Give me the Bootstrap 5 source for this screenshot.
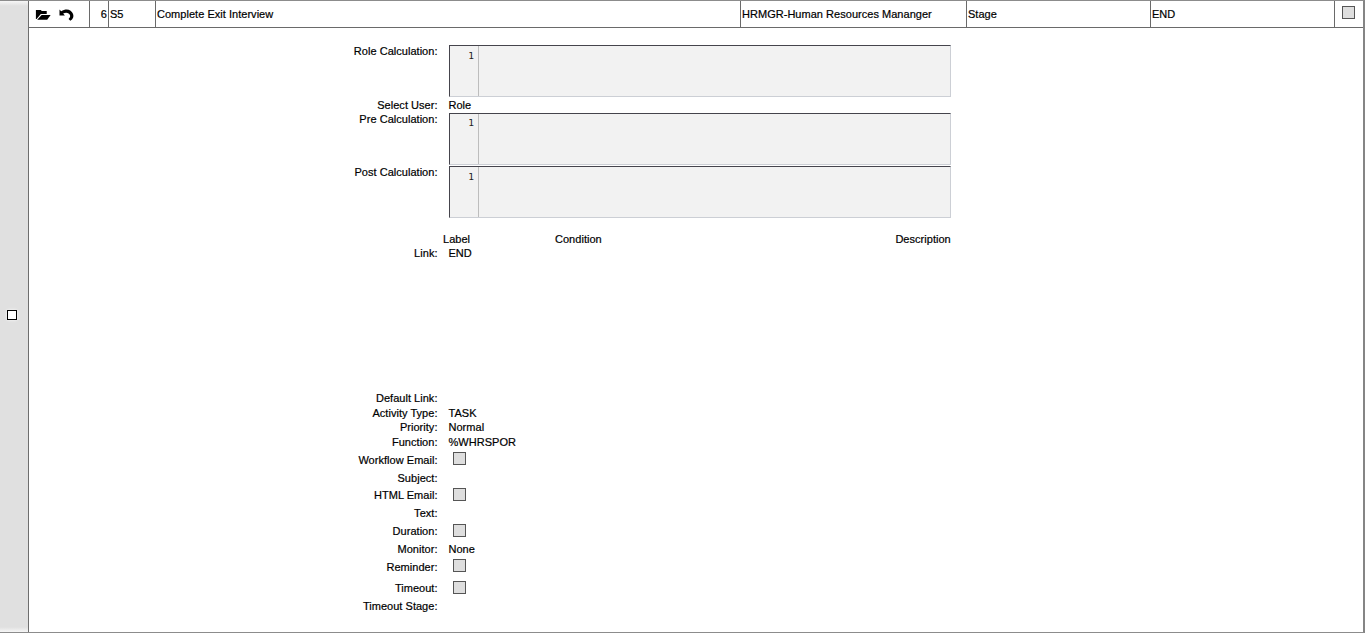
<!DOCTYPE html>
<html lang="en">
<head>
<meta charset="utf-8">
<title>Workflow Stage</title>
<meta name="viewport" content="width=device-width, initial-scale=1">
<link href="https://cdn.jsdelivr.net/npm/bootstrap@5.3.0/dist/css/bootstrap.min.css" rel="stylesheet">
<style>
  body { font: 11px/14px "Liberation Sans", Arial, sans-serif; color: #000; letter-spacing: .03px; -webkit-text-stroke: .2px #000; }
  .frame { border-top: 1px solid #8c8c8c; border-bottom: 1px solid #8c8c8c; border-right: 2px solid #858585; }
  .rail { width: 29px; background: linear-gradient(#f6f6f6, #e0e0e0 5px, #e0e0e0 calc(100% - 5px), #f6f6f6); border-right: 1px solid #6e6e6e; padding: 0 0 4px 7px; }
  .rail-box { width: 10px; height: 10px; border: 1px solid #000; background: #fff; box-shadow: 0 0 3px #fff; }
  .stage-bar { height: 27px; border-bottom: 1px solid #6a6a6a; }
  .cell { border-right: 1px solid #6a6a6a; padding: 6px 0 0 1px; white-space: nowrap; flex: none; }
  .tick { width: 13px; height: 13px; background: #dedede; border: 1px solid #555; flex: none; margin-left: 4px; }
  .tick-up { margin-top: -1px; }
  .stage-tick { margin: 5px 0 0 7px; }
  .field { display: flex; align-items: flex-start; }
  .field-label { width: 408.5px; text-align: right; margin-right: 11px; flex: none; }
  .code-box { width: 502px; height: 52px; margin: 1px 0 0 .5px; background: #f2f2f2; border: 1px solid #cccfd5; border-top-color: #45444c; border-left-color: #45444c; flex: none; }
  .gutter { width: 29px; border-right: 1px solid #bdbdbd; text-align: right; padding: 3px 4px 0 0; font: 9.5px/14px "DejaVu Sans Mono", monospace; color: #222; -webkit-text-stroke: 0; }
  .gutter-tight { padding-top: 2px; }
  .h14 { height: 14px; } .h15 { height: 15px; } .h17 { height: 17px; } .h18 { height: 18px; } .h21 { height: 21px; }
  .h53 { height: 53px; } .h54 { height: 54px; } .h67 { height: 67px; } .h145 { height: 145px; }
</style>
</head>
<body>
<div class="frame vh-100 d-flex overflow-hidden">
  <aside class="rail d-flex align-items-center flex-shrink-0"><div class="rail-box"></div></aside>
  <main class="flex-grow-1">
    <header class="stage-bar d-flex">
      <div class="cell d-flex" style="width:61px">
        <svg width="60" height="16" viewBox="30 6 60 16" aria-hidden="true">
          <path d="M36 18V9h5l1 1h5v3h-6l-4.300 5z"/>
          <path d="M37.300 18.800 41.800 14H51l-3.500 4.800z"/>
          <path d="M60 8.500v6h5.500l-1.800-2c3.200-1.600 6.300-.6 7 1.800.4 1.400-.2 2.600-1.500 3.700l1.800 1.800c2.800-1.500 3.800-4.200 2.800-6.800-1.600-4.600-6.900-6.200-12.100-2.800z"/>
        </svg>
      </div>
      <div class="cell text-end" style="width:19px;padding-right:1px">6</div>
      <div class="cell" style="width:47px">S5</div>
      <div class="cell" style="width:585px">Complete Exit Interview</div>
      <div class="cell" style="width:226px">HRMGR-Human Resources Mananger</div>
      <div class="cell" style="width:184px">Stage</div>
      <div class="cell" style="width:184px">END</div>
      <div class="tick stage-tick"></div>
    </header>
    <section class="pt-3">
      <div class="field h54"><div class="field-label">Role Calculation:</div><div class="code-box d-flex"><div class="gutter">1</div></div></div>
      <div class="field h14"><div class="field-label">Select User:</div><div>Role</div></div>
      <div class="field h53"><div class="field-label">Pre Calculation:</div><div class="code-box d-flex"><div class="gutter gutter-tight">1</div></div></div>
      <div class="field h67"><div class="field-label">Post Calculation:</div><div class="code-box d-flex"><div class="gutter">1</div></div></div>
      <div class="field h14"><div style="width:112px;margin-left:414px">Label</div><div>Condition</div><div class="text-end" style="width:349px">Description</div></div>
      <div class="field h145"><div class="field-label">Link:</div><div>END</div></div>
      <div class="field h15"><div class="field-label">Default Link:</div></div>
      <div class="field h14"><div class="field-label">Activity Type:</div><div>TASK</div></div>
      <div class="field h15"><div class="field-label">Priority:</div><div>Normal</div></div>
      <div class="field h18"><div class="field-label">Function:</div><div>%WHRSPOR</div></div>
      <div class="field h18"><div class="field-label">Workflow Email:</div><div class="tick tick-up"></div></div>
      <div class="field h17"><div class="field-label">Subject:</div></div>
      <div class="field h18"><div class="field-label">HTML Email:</div><div class="tick"></div></div>
      <div class="field h18"><div class="field-label">Text:</div></div>
      <div class="field h18"><div class="field-label">Duration:</div><div class="tick"></div></div>
      <div class="field h18"><div class="field-label">Monitor:</div><div>None</div></div>
      <div class="field h21"><div class="field-label">Reminder:</div><div class="tick tick-up"></div></div>
      <div class="field h18"><div class="field-label">Timeout:</div><div class="tick"></div></div>
      <div class="field h18"><div class="field-label">Timeout Stage:</div></div>
    </section>
  </main>
</div>
<script src="https://cdn.jsdelivr.net/npm/bootstrap@5.3.0/dist/js/bootstrap.bundle.min.js"></script>
</body>
</html>
